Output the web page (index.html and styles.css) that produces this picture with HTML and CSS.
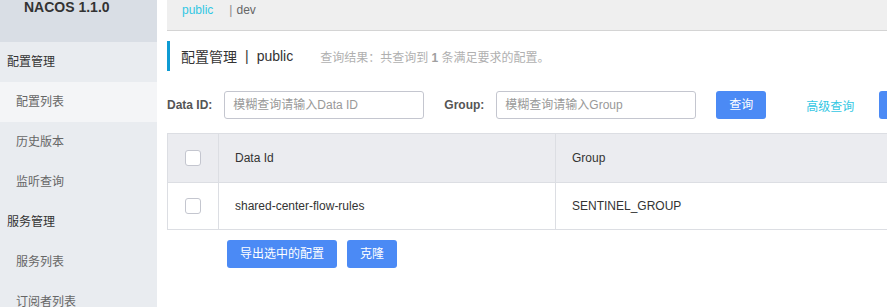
FILE: index.html
```html
<!DOCTYPE html>
<html lang="zh-CN">
<head>
<meta charset="utf-8">
<title>NACOS 1.1.0</title>
<link rel="stylesheet" href="styles.css">
</head>
<body>
<div class="layout">
  <aside class="sidebar">
    <div class="logo">NACOS 1.1.0</div>
    <div class="nav-group">配置管理</div>
    <div class="nav-item active">配置列表</div>
    <div class="nav-item">历史版本</div>
    <div class="nav-item">监听查询</div>
    <div class="nav-group">服务管理</div>
    <div class="nav-item">服务列表</div>
    <div class="nav-item">订阅者列表</div>
  </aside>
  <main class="main">
    <div class="tabs">
      <span class="tab tab-active">public</span>
      <span class="tab-sep">|</span>
      <span class="tab">dev</span>
    </div>
    <div class="title">
      <span class="title-text">配置管理</span>
      <span class="title-sep">|</span>
      <span class="title-text">public</span>
      <span class="result">查询结果：共查询到 <b>1</b> 条满足要求的配置。</span>
    </div>
    <div class="search">
      <label class="label">Data ID:</label>
      <input class="input" type="text" placeholder="模糊查询请输入Data ID">
      <label class="label label-group">Group:</label>
      <input class="input" type="text" placeholder="模糊查询请输入Group">
      <button class="btn btn-query">查询</button>
      <a class="link">高级查询</a>
      <button class="btn btn-more">导入配置</button>
    </div>
    <div class="table">
      <div class="cell head center"><span class="checkbox"></span></div>
      <div class="cell head">Data Id</div>
      <div class="cell head">Group</div>
      <div class="cell body center"><span class="checkbox"></span></div>
      <div class="cell body">shared-center-flow-rules</div>
      <div class="cell body">SENTINEL_GROUP</div>
    </div>
    <div class="actions">
      <button class="btn">导出选中的配置</button>
      <button class="btn">克隆</button>
    </div>
  </main>
</div>
</body>
</html>
```

FILE: styles.css
```css
* { box-sizing: border-box; }
html, body {
  margin: 0;
  padding: 0;
  overflow: hidden;
  background: #fff;
}
body {
  font-family: "Liberation Sans", Arial, "Noto Sans CJK SC", sans-serif;
  font-size: 12px;
  color: #333;
}
.layout {
  display: flex;
  height: 307px;
}
.sidebar {
  width: 157px;
  flex-shrink: 0;
  background: #e9ecf0;
}
.logo {
  height: 42px;
  background: #d9dee5;
  padding-left: 24px;
  font-size: 14px;
  font-weight: bold;
  line-height: 14px;
  color: #333;
}
.nav-group, .nav-item {
  height: 40px;
  line-height: 40px;
  font-size: 12px;
  white-space: nowrap;
}
.nav-group {
  padding-left: 7px;
  color: #333;
}
.nav-item {
  padding-left: 16px;
  color: #666;
}
.nav-item.active {
  background: #f4f5f7;
}
.main {
  flex: 1;
  min-width: 0;
  padding-left: 10px;
  overflow: hidden;
}
.tabs {
  height: 31px;
  background: #efefef;
  border-bottom: 1px solid #d4d4d4;
  padding-left: 15px;
  display: flex;
  align-items: flex-start;
  line-height: 20px;
  width: 900px;
}
.tab { color: #666; }
.tab-active { color: #33c7e3; }
.tab-sep {
  color: #888;
  margin-left: 16px;
  margin-right: 4px;
}
.title {
  margin-top: 10px;
  height: 30px;
  border-left: 3px solid #0e9bd3;
  padding-left: 11px;
  display: flex;
  align-items: center;
  font-size: 14px;
  color: #333;
  white-space: nowrap;
}
.title-sep {
  margin: 0 8px;
}
.result {
  margin-left: 27px;
  font-size: 12px;
  color: #b0b0b0;
}
.result b { color: #a0a0a0; }
.search {
  margin-top: 20px;
  height: 28px;
  display: flex;
  align-items: center;
  white-space: nowrap;
  width: 900px;
}
.label {
  font-weight: bold;
  color: #555;
  margin-right: 12px;
}
.label-group { margin-left: 20px; }
.input {
  width: 200px;
  height: 28px;
  border: 1px solid #c4c6cf;
  border-radius: 3px;
  padding: 0 8px;
  font-family: inherit;
  font-size: 12px;
  color: #333;
  outline: none;
}
.input::placeholder { color: #999; }
.btn {
  height: 28px;
  padding: 0 13px;
  border: none;
  border-radius: 3px;
  background: #4b8af5;
  color: #fff;
  font-family: inherit;
  font-size: 12px;
  line-height: 28px;
  cursor: pointer;
  flex-shrink: 0;
}
.btn-query { margin-left: 20px; }
.link {
  margin-left: 40px;
  color: #33c7e3;
}
.btn-more { margin-left: 25px; }
.table {
  margin-top: 14px;
  display: grid;
  grid-template-columns: 51px 337px 500px;
  border-top: 1px solid #dcdee3;
  border-left: 1px solid #dcdee3;
  width: 888px;
}
.cell {
  border-right: 1px solid #dcdee3;
  border-bottom: 1px solid #dcdee3;
  padding-left: 16px;
  display: flex;
  align-items: center;
  white-space: nowrap;
  color: #333;
}
.cell.head {
  height: 49px;
  background: #ebecf0;
}
.cell.body {
  height: 47px;
}
.cell.center {
  padding-left: 0;
  justify-content: center;
}
.checkbox {
  display: block;
  width: 16px;
  height: 16px;
  border: 1px solid #c4c6cf;
  border-radius: 3px;
  background: #fff;
}
.actions {
  margin-top: 10px;
  margin-left: 60px;
  display: flex;
  gap: 10px;
}
```
